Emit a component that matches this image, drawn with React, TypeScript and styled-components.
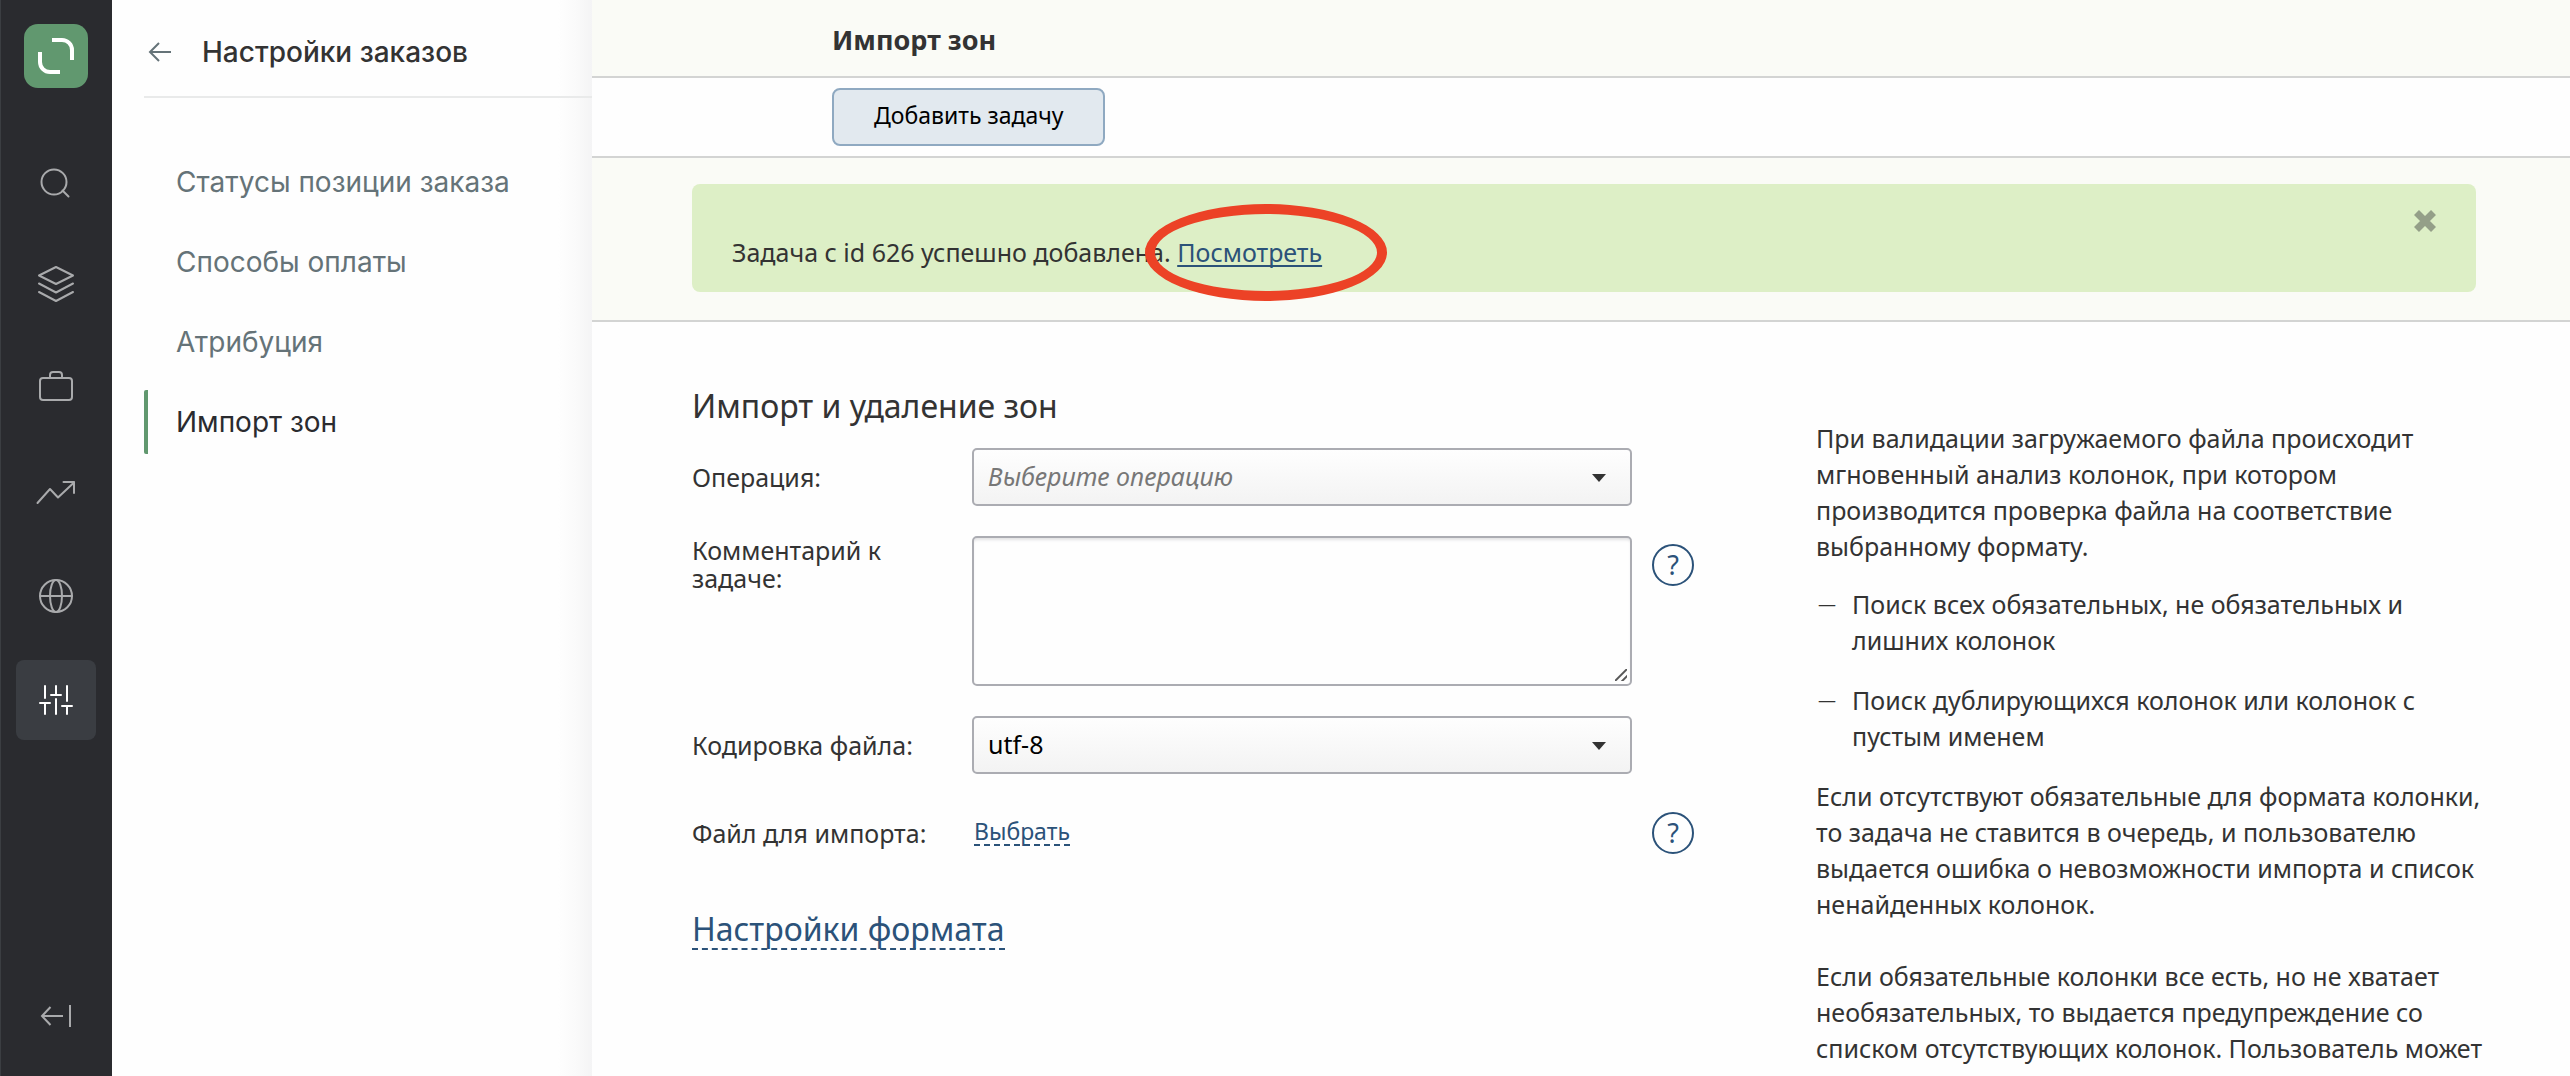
import React, { useState } from "react";
import styled, { createGlobalStyle } from "styled-components";

const font = {
  menu: '"Inter", "Roboto", sans-serif',
  page: '"Noto Sans", "Open Sans", sans-serif',
};

const color = {
  rail: "#2a2b2f",
  railActive: "#3a3d42",
  railIcon: "#a9aaac",
  green: "#61986f",
  text: "#333333",
  muted: "#657378",
  link: "#2b5279",
  line: "#d3d4d3",
  band: "#fafbf6",
  field: "#abacb2",
};

const GlobalStyle = createGlobalStyle`
  *, *::before, *::after { box-sizing: border-box; }
  body { margin: 0; background: #fefefe; color: ${color.text}; }
  button, select, textarea { font: inherit; color: inherit; }
  h1, h2, p, ul { margin: 0; padding: 0; font-weight: 400; }
`;

const Layout = styled.div`
  display: flex;
  min-height: 100vh;
`;

/* Rail with the main sections */

const Rail = styled.nav`
  flex: 0 0 112px;
  display: flex;
  flex-direction: column;
  align-items: center;
  padding: 24px 0 20px;
  background: ${color.rail};
  box-shadow: inset 1px 0 0 #3b3e42;
`;

const Logo = styled.a`
  width: 64px;
  height: 64px;
  margin-bottom: 52px;
  border-radius: 14px;
  background: ${color.green};
`;

const RailList = styled.ul`
  flex: 1;
  display: flex;
  flex-direction: column;
  gap: 24px;
  list-style: none;
`;

const RailButton = styled.button<{ $active?: boolean }>`
  display: block;
  width: 80px;
  height: 80px;
  padding: 0;
  border: 0;
  border-radius: 8px;
  cursor: pointer;
  background: ${(p) => (p.$active ? color.railActive : "transparent")};
  color: ${(p) => (p.$active ? "#ffffff" : color.railIcon)};
`;

const Glyph = styled.svg`
  display: block;
  fill: none;
  stroke: currentColor;
  stroke-width: 2;
`;

/* Section menu */

const Menu = styled.aside`
  flex: 0 0 480px;
  padding-left: 32px;
  background: linear-gradient(to left, #f4f4f5, #fafafa 16px, #fefefe 34px);
  font: 400 28px/40px ${font.menu};
`;

const MenuHeader = styled.header`
  display: flex;
  align-items: center;
  gap: 30px;
  height: 98px;
  padding: 8px 0 0 4px;
  border-bottom: 2px solid #e9eaea;
`;

const BackButton = styled.button`
  padding: 0;
  border: 0;
  background: none;
  color: ${color.muted};
  cursor: pointer;
`;

const MenuTitle = styled.h2`
  font-size: 28px;
  font-weight: 500;
`;

const MenuList = styled.ul`
  display: flex;
  flex-direction: column;
  gap: 16px;
  padding-top: 52px;
  list-style: none;
`;

const MenuLink = styled.a<{ $active: boolean }>`
  display: flex;
  align-items: center;
  height: 64px;
  padding-left: 32px;
  text-decoration: none;
  color: ${(p) => (p.$active ? color.rail : color.muted)};
  background: ${(p) => (p.$active ? `linear-gradient(${color.green}, ${color.green}) left / 4px 100% no-repeat` : "none")};
  border-radius: 2px;
`;

/* Page */

const Page = styled.main`
  flex: 1;
  min-width: 0;
  font: 400 25px/36px ${font.page};
`;

const TitleBar = styled.header`
  display: flex;
  align-items: center;
  height: 78px;
  padding: 4px 94px 0 240px;
  border-bottom: 2px solid ${color.line};
  background: ${color.band};
`;

const PageTitle = styled.h1`
  font-size: 27px;
  font-weight: 700;
`;

const Toolbar = styled.div`
  padding: 10px 94px 10px 240px;
  border-bottom: 2px solid ${color.line};
`;

const PrimaryButton = styled.button`
  display: block;
  height: 58px;
  padding: 0 40px 4px;
  border: 2px solid #8fa9c1;
  border-radius: 8px;
  background: #e2e9ef;
  color: #000000;
  font-size: 23px;
  cursor: pointer;
`;

const NoticeBand = styled.section`
  padding: 26px 94px 28px 100px;
  border-bottom: 2px solid ${color.line};
  background: ${color.band};
`;

const Notice = styled.div`
  position: relative;
  padding: 50px 40px 22px;
  border-radius: 8px;
  background: #ddefc6;
`;

const NoticeLink = styled.a`
  position: relative;
  display: inline-block;
  color: ${color.link};
  text-decoration: underline;
  text-decoration-thickness: 2px;
  text-underline-offset: 3px;
  text-decoration-skip-ink: none;

  &::after {
    content: "";
    position: absolute;
    inset: -30px -65px -31px -32px;
    border: 10px solid #ec4226;
    border-radius: 50%;
    pointer-events: none;
  }
`;

const CloseButton = styled.button`
  position: absolute;
  top: 24px;
  right: 38px;
  padding: 0;
  border: 0;
  background: none;
  color: #949f88;
  cursor: pointer;
`;

const Content = styled.div`
  display: grid;
  grid-template-columns: minmax(0, 1002px) minmax(0, 668px);
  justify-content: space-between;
  gap: 40px;
  padding: 64px 86px 0 100px;
`;

const SectionTitle = styled.h2`
  margin-bottom: 22px;
  font-size: 32px;
  line-height: 40px;
`;

const Rows = styled.div`
  display: flex;
  flex-direction: column;
  gap: 30px;
`;

const Row = styled.div<{ $top?: boolean }>`
  display: grid;
  grid-template-columns: 260px minmax(0, 1fr) 42px;
  column-gap: 20px;
  align-items: ${(p) => (p.$top ? "start" : "center")};
  min-height: 58px;
`;

const Label = styled.label`
  padding-right: 20px;
  line-height: 28px;
`;

const SelectBox = styled.div`
  position: relative;
`;

const Select = styled.select<{ $empty?: boolean }>`
  display: block;
  width: 100%;
  height: 58px;
  padding: 0 60px 2px 14px;
  border: 2px solid ${color.field};
  border-radius: 5px;
  appearance: none;
  background: linear-gradient(#fefefe, #f3f3f3);
  color: ${(p) => (p.$empty ? "#777777" : "#000000")};
  font-style: ${(p) => (p.$empty ? "italic" : "normal")};
`;

const SelectArrow = styled.svg`
  position: absolute;
  top: 26px;
  right: 26px;
  fill: ${color.text};
  pointer-events: none;
`;

const TextArea = styled.textarea`
  display: block;
  width: 100%;
  height: 150px;
  padding: 10px 14px;
  border: 2px solid ${color.field};
  border-radius: 5px;
  background: #fefefe;
  box-shadow: inset 0 3px 3px -1px #e2e2e4;
  resize: vertical;

  &::-webkit-resizer {
    background: linear-gradient(
        135deg,
        transparent 7px,
        #555 8px,
        #555 9px,
        transparent 10px,
        transparent 12px,
        #555 13px,
        #555 14px,
        transparent 15px
      )
      0 0 / 12px 12px no-repeat;
  }
`;

const HelpButton = styled.button<{ $offset?: boolean }>`
  width: 42px;
  height: 42px;
  margin-top: ${(p) => (p.$offset ? "8px" : "0")};
  padding: 0;
  border: 2px solid ${color.link};
  border-radius: 50%;
  background: none;
  color: ${color.link};
  font-size: 27px;
  line-height: 36px;
  text-align: center;
  cursor: pointer;
`;

const DashedButton = styled.button<{ $large?: boolean }>`
  padding: 0;
  border: 0;
  border-bottom: 2px dashed ${color.link};
  background: none;
  color: ${color.link};
  font-size: ${(p) => (p.$large ? "32px" : "23px")};
  line-height: ${(p) => (p.$large ? "38px" : "26px")};
  cursor: pointer;
`;

const FileCell = styled.div`
  display: flex;
  padding: 0 0 2px 2px;
`;

const FormatLine = styled.div`
  display: flex;
  padding-top: 48px;
`;

const Info = styled.aside`
  padding-top: 34px;
`;

const InfoText = styled.p`
  & + & {
    margin-top: 36px;
  }
`;

const InfoList = styled.ul`
  display: flex;
  flex-direction: column;
  gap: 24px;
  margin: 22px 0 24px;
  list-style: none;
`;

const InfoItem = styled.li`
  display: grid;
  grid-template-columns: 36px 1fr;

  &::before {
    content: "—";
    padding-left: 2px;
    font-size: 18px;
  }
`;

const SearchIcon = () => (
  <>
    <circle cx="38" cy="42" r="12.5" />
    <path d="M46.5 50.5l6 6" />
  </>
);
const LayersIcon = () => (
  <>
    <path d="M40 23l17 8.5L40 40l-17-8.5z" />
    <path d="M23 39.5l17 9 17-9M23 48l17 9 17-9" />
  </>
);
const CaseIcon = () => (
  <>
    <rect x="24" y="30" width="32" height="22" rx="3" />
    <path d="M34 30v-3a3 3 0 0 1 3-3h6a3 3 0 0 1 3 3v3" />
  </>
);
const TrendIcon = () => (
  <>
    <path d="M21.5 51L34 37l8 8.5L58 30.5" />
    <path d="M47.5 30H58v11" />
  </>
);
const GlobeIcon = () => (
  <>
    <circle cx="40" cy="40" r="16" />
    <ellipse cx="40" cy="40" rx="6" ry="16" />
    <path d="M24 40h32" />
  </>
);
const SlidersIcon = () => (
  <path d="M29 26v12M24 43h10M29 43v11M40 26v9M35 35h10M40 39v15M51 26v15M46 46h10M51 46v8" />
);

const sections = [
  { name: "Поиск", Icon: SearchIcon },
  { name: "Каталог", Icon: LayersIcon },
  { name: "Заказы", Icon: CaseIcon },
  { name: "Аналитика", Icon: TrendIcon },
  { name: "Сайт", Icon: GlobeIcon },
  { name: "Настройки", Icon: SlidersIcon, active: true },
];

const menu = ["Статусы позиции заказа", "Способы оплаты", "Атрибуция", "Импорт зон"];

const Arrow = () => (
  <SelectArrow width="14" height="8" viewBox="0 0 14 8" aria-hidden="true">
    <path d="M0 0h14L7 8z" />
  </SelectArrow>
);

export default function App() {
  const [operation, setOperation] = useState("");
  const [comment, setComment] = useState("");
  const [encoding, setEncoding] = useState("utf-8");
  const [notice, setNotice] = useState(true);

  return (
    <>
      <GlobalStyle />
      <Layout>
        <Rail aria-label="Разделы">
          <Logo href="#" aria-label="Главная">
            <Glyph width="64" height="64" viewBox="0 0 64 64" color="#fff">
              <path strokeWidth="4" d="M28 16h10a10 10 0 0 1 10 10v10M36 48H26a10 10 0 0 1-10-10V28" />
            </Glyph>
          </Logo>
          <RailList>
            {sections.map(({ name, Icon, active }) => (
              <li key={name}>
                <RailButton type="button" aria-label={name} $active={active}>
                  <Glyph width="80" height="80" viewBox="0 0 80 80" strokeLinecap="round" strokeLinejoin="round">
                    <Icon />
                  </Glyph>
                </RailButton>
              </li>
            ))}
          </RailList>
          <RailButton type="button" aria-label="Свернуть">
            <Glyph width="80" height="80" viewBox="0 0 80 80">
              <path d="M47 40H26M34.5 31L26 40l8.5 9M54 29v22" />
            </Glyph>
          </RailButton>
        </Rail>

        <Menu>
          <MenuHeader>
            <BackButton type="button" aria-label="Назад">
              <Glyph width="24" height="24" viewBox="0 0 24 24">
                <path d="M23 12H2M11 3l-9 9 9 9" />
              </Glyph>
            </BackButton>
            <MenuTitle>Настройки заказов</MenuTitle>
          </MenuHeader>
          <nav aria-label="Настройки заказов">
            <MenuList>
              {menu.map((item) => (
                <li key={item}>
                  <MenuLink href="#" $active={item === "Импорт зон"}>
                    {item}
                  </MenuLink>
                </li>
              ))}
            </MenuList>
          </nav>
        </Menu>

        <Page>
          <TitleBar>
            <PageTitle>Импорт зон</PageTitle>
          </TitleBar>
          <Toolbar>
            <PrimaryButton type="button">Добавить задачу</PrimaryButton>
          </Toolbar>
          {notice && (
            <NoticeBand>
              <Notice role="status">
                Задача с id 626 успешно добавлена. <NoticeLink href="#">Посмотреть</NoticeLink>
                <CloseButton type="button" aria-label="Закрыть" onClick={() => setNotice(false)}>
                  <Glyph width="26" height="26" viewBox="0 0 26 26">
                    <path strokeWidth="7" d="M4.5 4.5l17 17M21.5 4.5l-17 17" />
                  </Glyph>
                </CloseButton>
              </Notice>
            </NoticeBand>
          )}
          <Content>
            <form onSubmit={(e) => e.preventDefault()}>
              <SectionTitle>Импорт и удаление зон</SectionTitle>
              <Rows>
                <Row>
                  <Label htmlFor="operation">Операция:</Label>
                  <SelectBox>
                    <Select
                      id="operation"
                      $empty={operation === ""}
                      value={operation}
                      onChange={(e) => setOperation(e.target.value)}
                    >
                      <option value="">Выберите операцию</option>
                    </Select>
                    <Arrow />
                  </SelectBox>
                </Row>
                <Row $top>
                  <Label htmlFor="comment">Комментарий к задаче:</Label>
                  <TextArea id="comment" value={comment} onChange={(e) => setComment(e.target.value)} />
                  <HelpButton type="button" $offset aria-label="Справка о комментарии">
                    ?
                  </HelpButton>
                </Row>
                <Row>
                  <Label htmlFor="encoding">Кодировка файла:</Label>
                  <SelectBox>
                    <Select id="encoding" value={encoding} onChange={(e) => setEncoding(e.target.value)}>
                      <option>utf-8</option>
                    </Select>
                    <Arrow />
                  </SelectBox>
                </Row>
                <Row>
                  <Label htmlFor="file">Файл для импорта:</Label>
                  <FileCell>
                    <DashedButton id="file" type="button">
                      Выбрать
                    </DashedButton>
                  </FileCell>
                  <HelpButton type="button" aria-label="Справка о файле">
                    ?
                  </HelpButton>
                </Row>
              </Rows>
              <FormatLine>
                <DashedButton type="button" $large>
                  Настройки формата
                </DashedButton>
              </FormatLine>
            </form>
            <Info>
              <InfoText>
                При валидации загружаемого файла происходит мгновенный анализ колонок, при котором
                производится проверка файла на соответствие выбранному формату.
              </InfoText>
              <InfoList>
                <InfoItem>Поиск всех обязательных, не обязательных и лишних колонок</InfoItem>
                <InfoItem>Поиск дублирующихся колонок или колонок с пустым именем</InfoItem>
              </InfoList>
              <InfoText>
                Если отсутствуют обязательные для формата колонки, то задача не ставится в очередь, и
                пользователю выдается ошибка о невозможности импорта и список ненайденных колонок.
              </InfoText>
              <InfoText>
                Если обязательные колонки все есть, но не хватает необязательных, то выдается
                предупреждение со списком отсутствующих колонок. Пользователь может
              </InfoText>
            </Info>
          </Content>
        </Page>
      </Layout>
    </>
  );
}
